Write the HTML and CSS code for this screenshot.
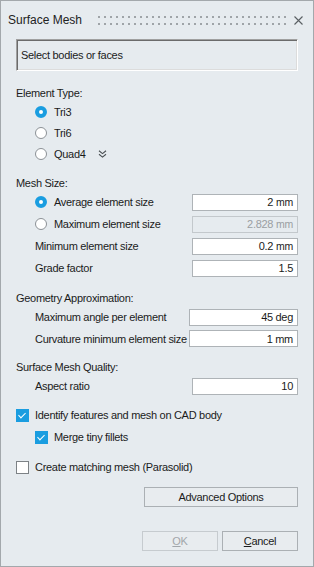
FILE: index.html
```html
<!DOCTYPE html>
<html lang="en">
<head>
  <meta charset="UTF-8">
  <title>Surface Mesh</title>
  <link rel="stylesheet" href="styles.css">
</head>
<body>

<div class="dialog">
  <div class="titlebar">
    <span class="title">Surface Mesh</span>
    <span class="grip"></span>
    <svg class="close" width="9" height="9" viewBox="0 0 9 9">
      <path d="M0.5 0.5 L8.5 8.5 M8.5 0.5 L0.5 8.5" stroke="#5a5f63" stroke-width="1.1" fill="none"/>
    </svg>
  </div>

  <div class="content">
    <div class="selector">Select bodies or faces</div>

    <div class="group g-type">
      <div class="group-label">Element Type:</div>
      <div class="opt-row"><span class="radio checked"></span>Tri3</div>
      <div class="opt-row"><span class="radio"></span>Tri6</div>
      <div class="opt-row">
        <span class="radio"></span>Quad4
        <svg class="more" width="9" height="8" viewBox="0 0 9 8">
          <path d="M1 0.8 L4.5 3.6 L8 0.8 M1 4.3 L4.5 7.1 L8 4.3" stroke="#4a4f53" stroke-width="1.1" fill="none"/>
        </svg>
      </div>
    </div>

    <div class="group g-size">
      <div class="group-label">Mesh Size:</div>
      <div class="field-row">
        <span class="field-label"><span class="radio checked"></span>Average element size</span>
        <span class="input">2<span class="unit">mm</span></span>
      </div>
      <div class="field-row">
        <span class="field-label"><span class="radio"></span>Maximum element size</span>
        <span class="input disabled">2.828<span class="unit">mm</span></span>
      </div>
      <div class="field-row">
        <span class="field-label">Minimum element size</span>
        <span class="input">0.2<span class="unit">mm</span></span>
      </div>
      <div class="field-row">
        <span class="field-label">Grade factor</span>
        <span class="input">1.5</span>
      </div>
    </div>

    <div class="group g-geom">
      <div class="group-label">Geometry Approximation:</div>
      <div class="field-row">
        <span class="field-label">Maximum angle per element</span>
        <span class="input wide">45 deg</span>
      </div>
      <div class="field-row tight">
        <span class="field-label">Curvature minimum element size</span>
        <span class="input wide">1 mm</span>
      </div>
    </div>

    <div class="group g-quality">
      <div class="group-label">Surface Mesh Quality:</div>
      <div class="field-row">
        <span class="field-label">Aspect ratio</span>
        <span class="input">10</span>
      </div>
    </div>

    <div class="group g-checks">
      <div class="check-row"><span class="checkbox checked"></span>Identify features and mesh on CAD body</div>
      <div class="check-row sub"><span class="checkbox checked"></span>Merge tiny fillets</div>
    </div>

    <div class="group g-match">
      <div class="check-row"><span class="checkbox"></span>Create matching mesh (Parasolid)</div>
    </div>

    <div class="actions">
      <button class="btn btn-wide">Advanced Options</button>
    </div>

    <div class="actions footer">
      <button class="btn" disabled><u>O</u>K</button>
      <button class="btn"><u>C</u>ancel</button>
    </div>
  </div>
</div>

</body>
</html>
```

FILE: styles.css
```css
body {
  margin: 0;
  font-family: "Liberation Sans", Arial, sans-serif;
  font-size: 11px;
  letter-spacing: -0.3px;
  color: #1b1b1b;
}

.dialog {
  width: 314px;
  height: 567px;
  box-sizing: border-box;
  border: 1px solid #a3a8ac;
  background: #e6ebef;
}

.titlebar {
  display: flex;
  align-items: center;
  height: 38px;
  padding: 0 10px 0 7px;
}

.title {
  font-size: 12px;
  letter-spacing: 0;
  color: #222;
}

.grip {
  flex: 1;
  height: 9px;
  margin: 0 8px 0 16px;
  background-image: radial-gradient(circle at 1px 1px, #9fa4a8 1px, transparent 1.4px);
  background-size: 6px 7px;
}

.content {
  padding: 0 15px;
}

.selector {
  height: 32px;
  box-sizing: border-box;
  display: flex;
  align-items: center;
  padding-left: 4px;
  border: 1px solid;
  border-color: #a0a0a0 #ffffff #ffffff #a0a0a0;
  box-shadow: inset 1px 1px 0 #6b6b6b, inset -1px -1px 0 #dcdcdc;
}

.group-label {
  height: 17px;
  display: flex;
  align-items: center;
}

.g-type { margin-top: 13px; }
.g-size { margin-top: 10px; }
.g-geom { margin-top: 10px; }
.g-quality { margin-top: 9px; }
.g-checks { margin-top: 7px; }
.g-match { margin-top: 8px; }

.opt-row {
  height: 21px;
  display: flex;
  align-items: center;
  margin-left: 19px;
}

.field-row {
  height: 22px;
  display: flex;
  align-items: center;
  margin-left: 19px;
  white-space: nowrap;
}

.field-row.tight {
  height: 21px;
}

.field-label {
  flex: 1;
  display: flex;
  align-items: center;
}

.radio {
  width: 12px;
  height: 12px;
  box-sizing: border-box;
  border: 1px solid #8c9196;
  border-radius: 50%;
  background: #fff;
  margin-right: 7px;
}

.radio.checked {
  border: 4px solid #1a9de0;
  background: #fff;
}

.more {
  margin-left: 12px;
  margin-top: 1px;
}

.input {
  width: 106px;
  height: 17px;
  box-sizing: border-box;
  border: 1px solid #aeb3b7;
  background: #fff;
  display: flex;
  align-items: center;
  justify-content: flex-end;
  padding-right: 4px;
}

.input.wide {
  width: 109px;
}

.input.disabled {
  background: #e6ebef;
  border-color: #c3c8cc;
  color: #9a9ea2;
}

.unit {
  margin-left: 3px;
  font-size: 10.5px;
}

.check-row {
  height: 22px;
  display: flex;
  align-items: center;
}

.check-row.sub {
  margin-left: 19px;
}

.checkbox {
  width: 13px;
  height: 13px;
  box-sizing: border-box;
  border: 1px solid #7d8286;
  background: #fff;
  margin-right: 6px;
  position: relative;
}

.checkbox.checked {
  border-color: #1a9de0;
  background: #1a9de0;
}

.checkbox.checked::after {
  content: "";
  position: absolute;
  left: 3px;
  top: 1px;
  width: 3px;
  height: 6px;
  border: solid #fff;
  border-width: 0 1.5px 1.5px 0;
  transform: rotate(45deg);
}

.actions {
  display: flex;
  justify-content: flex-end;
  gap: 4px;
  margin-top: 9px;
}

.actions.footer {
  margin-top: 24px;
}

.btn {
  width: 76px;
  height: 20px;
  padding: 0;
  font-family: inherit;
  font-size: 11px;
  letter-spacing: -0.3px;
  color: #1b1b1b;
  background: #e8ecef;
  border: 1px solid #abb0b4;
}

.btn-wide {
  width: 154px;
}

.btn:disabled {
  color: #a2a6aa;
  border-color: #c6cbcf;
}
```
